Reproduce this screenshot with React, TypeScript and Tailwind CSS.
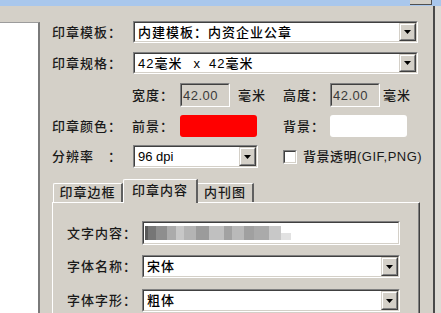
import React from "react";

const FONT = { fontFamily: '"Liberation Sans", "Noto Sans CJK SC", sans-serif' };

function Sunken({ className = "", inner = "bg-white", children }: { className?: string; inner?: string; children?: React.ReactNode }) {
  return (
    <div className={`border border-t-[#808080] border-l-[#808080] border-b-white border-r-white ${className}`}>
      <div className={`h-full w-full border border-t-[#404040] border-l-[#404040] border-b-[#d4d0c8] border-r-[#d4d0c8] ${inner} flex items-center overflow-hidden`}>
        {children}
      </div>
    </div>
  );
}

function DropBtn() {
  return (
    <div className="h-full w-[17px] shrink-0 border border-t-[#d4d0c8] border-l-[#d4d0c8] border-b-[#404040] border-r-[#404040]">
      <div className="h-full w-full border border-t-white border-l-white border-b-[#808080] border-r-[#808080] bg-[#d4d0c8] flex items-center justify-center">
        <svg width="7" height="4" viewBox="0 0 7 4">
          <path d="M0 0H7L3.5 4Z" fill="#000" />
        </svg>
      </div>
    </div>
  );
}

function Combo({ className = "", children }: { className?: string; children?: React.ReactNode }) {
  return (
    <Sunken className={className}>
      <div className="flex-1 flex items-center pl-[3px] text-black whitespace-nowrap">{children}</div>
      <DropBtn />
    </Sunken>
  );
}

const blocks: [number, string][] = [
  [3, "#5a5a5a"],
  [8, "#767676"],
  [11, "#8e8e8e"],
  [9, "#ababab"],
  [8, "#c7c7c7"],
  [12, "#b4b4b4"],
  [13, "#9b9b9b"],
  [15, "#c0c0c0"],
  [8, "#a2a2a2"],
  [12, "#b9b9b9"],
  [10, "#a0a0a0"],
  [15, "#aaaaaa"],
  [12, "#c8c8c8"],
];

export default function App() {
  return (
    <div className="w-[441px] h-[313px] overflow-hidden bg-[#d4d0c8] text-[13px] font-medium leading-none text-[#1a1a1a]" style={FONT}>
      {/* title strip */}
      <div className="h-[6px] bg-[#a9c7ec] flex justify-end">
        <div className="w-[22px] h-[5px] mr-[9px] bg-[#d4d0c8] border-b border-r border-[#505050]" />
      </div>
      <div className="flex h-[307px]">
        {/* left list */}
        <div className="w-[40px] shrink-0 pt-[16px]">
          <div className="h-full bg-white border-t border-[#9c9c9c] border-r-2 border-r-[#7a7a7a]" />
        </div>
        <div className="w-[12px] shrink-0" />
        {/* main */}
        <div className="w-[381px] shrink-0 flex flex-col pt-[15px] tracking-[1px]">
          <div className="flex items-center h-[22px]">
            <span className="w-[81px] shrink-0">印章模板：</span>
            <Combo className="w-[285px] h-[22px]">内建模板：内资企业公章</Combo>
          </div>
          <div className="flex items-center h-[22px] mt-[9px]">
            <span className="w-[81px] shrink-0">印章规格：</span>
            <Combo className="w-[285px] h-[22px]">
              <span>42毫米</span>
              <span className="ml-[11px]">x</span>
              <span className="ml-[8px]">42毫米</span>
            </Combo>
          </div>
          <div className="flex items-center h-[24px] mt-[9px]">
            <span className="w-[80px] shrink-0" />
            <span className="w-[48px] shrink-0">宽度：</span>
            <Sunken className="w-[50px] h-[24px]" inner="bg-[#d4d0c8]">
              <span className="pl-[1px] text-[#3a3a3a] font-normal tracking-[0.5px]">42.00</span>
            </Sunken>
            <span className="w-[53px] shrink-0 pl-[8px]">毫米</span>
            <span className="w-[47px] shrink-0">高度：</span>
            <Sunken className="w-[50px] h-[24px]" inner="bg-[#d4d0c8]">
              <span className="pl-[1px] text-[#3a3a3a] font-normal tracking-[0.5px]">42.00</span>
            </Sunken>
            <span className="pl-[3px]">毫米</span>
          </div>
          <div className="flex items-center h-[22px] mt-[8px]">
            <span className="w-[80px] shrink-0">印章颜色：</span>
            <span className="w-[48px] shrink-0">前景：</span>
            <div className="w-[77px] h-[22px] rounded-[3px] bg-[#ff0000]" />
            <span className="w-[26px] shrink-0" />
            <span className="w-[47px] shrink-0">背景：</span>
            <div className="w-[77px] h-[22px] rounded-[3px] bg-white" />
          </div>
          <div className="flex items-center h-[23px] mt-[8px]">
            <span className="w-[81px] shrink-0">分辨率{"\u3000"}：</span>
            <Combo className="w-[125px] h-[23px]">
              <span className="tracking-normal font-normal">96 dpi</span>
            </Combo>
            <span className="w-[25px] shrink-0" />
            <Sunken className="w-[14px] h-[14px]" />
            <span className="ml-[6px] tracking-[0.5px]">背景透明(GIF,PNG)</span>
          </div>
          {/* tabs */}
          <div className="flex items-end h-[23px] mt-[11px] pl-[1px]">
            <div className="w-[70px] h-[19px] border-t border-l border-white border-r-2 border-r-[#606060] rounded-tl-[2px] flex items-center justify-center pb-[1px]">
              印章边框
            </div>
            <div className="relative z-10 -mb-px w-[75px] h-[24px] bg-[#d4d0c8] border-t border-l border-white border-r-2 border-r-[#606060] rounded-tl-[2px] flex items-start justify-center pt-[4px]">
              印章内容
            </div>
            <div className="w-[56px] h-[19px] border-t border-white border-r-2 border-r-[#606060] flex items-center justify-center pb-[1px]">
              内刊图
            </div>
          </div>
          {/* panel */}
          <div className="w-[368px] flex-1 border-t border-l border-white border-r border-r-[#404040]">
            <div className="h-full border-r border-r-[#808080] flex flex-col pt-[18px] pl-[14px]">
              <div className="flex items-center h-[24px]">
                <span className="w-[75px] shrink-0">文字内容：</span>
                <Sunken className="w-[258px] h-[24px]">
                  <div className="flex h-[14px] ml-[1px]">
                    {blocks.map(([w, c], i) => (
                      <div key={i} className="h-full" style={{ width: w, background: c }} />
                    ))}
                    <div className="h-[7px] mt-[7px] w-[10px] bg-[#e2e2e2]" />
                  </div>
                </Sunken>
              </div>
              <div className="flex items-center h-[23px] mt-[10px]">
                <span className="w-[75px] shrink-0">字体名称：</span>
                <Combo className="w-[258px] h-[23px]">宋体</Combo>
              </div>
              <div className="flex items-center h-[23px] mt-[11px]">
                <span className="w-[75px] shrink-0">字体字形：</span>
                <Combo className="w-[258px] h-[23px]">粗体</Combo>
              </div>
            </div>
          </div>
        </div>
        <div className="w-[2px] shrink-0 bg-[#4a4a4a]" />
        <div className="flex-1 bg-[#dedbd5]" />
      </div>
    </div>
  );
}
